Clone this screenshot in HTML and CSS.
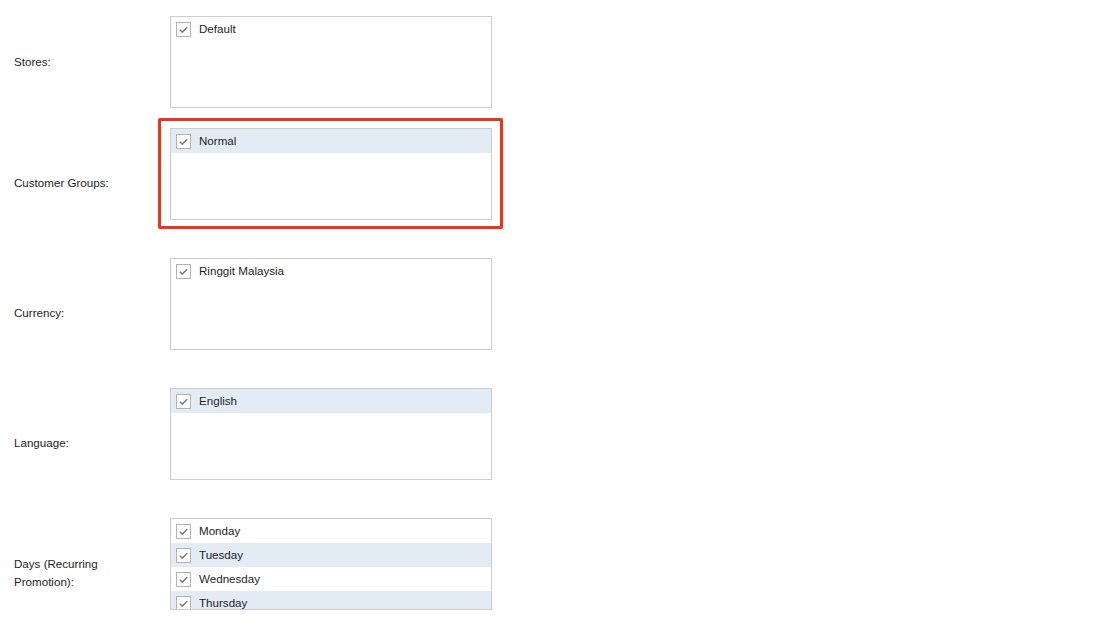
FILE: index.html
```html
<!DOCTYPE html>
<html>
<head>
<meta charset="utf-8">
<link rel="stylesheet" href="styles.css">
</head>
<body>
<div class="form">
  <div class="row first">
    <div class="label">Stores:</div>
    <div class="field">
      <div class="list">
        <div class="item"><span class="cb"><svg viewBox="0 0 12 12"><path d="M2.6 6.2 L4.9 8.4 L9.4 3.9"/></svg></span><span>Default</span></div>
      </div>
    </div>
  </div>
  <div class="row">
    <div class="label">Customer Groups:</div>
    <div class="field">
      <div class="highlight">
        <div class="list">
          <div class="item sel"><span class="cb"><svg viewBox="0 0 12 12"><path d="M2.6 6.2 L4.9 8.4 L9.4 3.9"/></svg></span><span>Normal</span></div>
        </div>
      </div>
    </div>
  </div>
  <div class="row">
    <div class="label">Currency:</div>
    <div class="field">
      <div class="list">
        <div class="item"><span class="cb"><svg viewBox="0 0 12 12"><path d="M2.6 6.2 L4.9 8.4 L9.4 3.9"/></svg></span><span>Ringgit Malaysia</span></div>
      </div>
    </div>
  </div>
  <div class="row">
    <div class="label">Language:</div>
    <div class="field">
      <div class="list">
        <div class="item sel"><span class="cb"><svg viewBox="0 0 12 12"><path d="M2.6 6.2 L4.9 8.4 L9.4 3.9"/></svg></span><span>English</span></div>
      </div>
    </div>
  </div>
  <div class="row">
    <div class="label">Days (Recurring<br>Promotion):</div>
    <div class="field">
      <div class="list">
        <div class="item"><span class="cb"><svg viewBox="0 0 12 12"><path d="M2.6 6.2 L4.9 8.4 L9.4 3.9"/></svg></span><span>Monday</span></div>
        <div class="item sel"><span class="cb"><svg viewBox="0 0 12 12"><path d="M2.6 6.2 L4.9 8.4 L9.4 3.9"/></svg></span><span>Tuesday</span></div>
        <div class="item"><span class="cb"><svg viewBox="0 0 12 12"><path d="M2.6 6.2 L4.9 8.4 L9.4 3.9"/></svg></span><span>Wednesday</span></div>
        <div class="item sel"><span class="cb"><svg viewBox="0 0 12 12"><path d="M2.6 6.2 L4.9 8.4 L9.4 3.9"/></svg></span><span>Thursday</span></div>
      </div>
    </div>
  </div>
</div>
</body>
</html>
```

FILE: styles.css
```css
html, body {
  margin: 0;
  padding: 0;
  background: #ffffff;
  width: 1100px;
  height: 627px;
  overflow: hidden;
}
body {
  font-family: "Liberation Sans", Arial, sans-serif;
  font-size: 11.6px;
  color: #1e1e1e;
}
.form {
  display: flex;
  flex-direction: column;
}
.row {
  display: flex;
  align-items: center;
  height: 130px;
}
.row.first {
  height: 118px;
}
.label {
  width: 170px;
  flex: none;
  padding-left: 14px;
  line-height: 18px;
  box-sizing: border-box;
}
.row.first .label {
  padding-top: 5px;
}
.field {
  align-self: flex-start;
  padding-top: 10px;
}
.row.first .field {
  padding-top: 16px;
}
.highlight {
  margin: -10px 0 0 -12px;
  padding: 7px 8px 6px 9px;
  border: 3px solid #dd3d1e;
  border-radius: 2px;
  width: fit-content;
  box-shadow: 0 0 1px rgba(221, 61, 30, 0.6);
}
.list {
  width: 320px;
  height: 90px;
  border: 1px solid #cdcdcd;
  overflow: hidden;
  background: #fff;
}
.item {
  display: flex;
  align-items: center;
  height: 24px;
  padding-left: 5px;
}
.item > span:last-child {
  position: relative;
  top: -1px;
}
.item.sel {
  background: #e3ecf5;
}
.cb {
  width: 13px;
  height: 13px;
  border: 1px solid #b3b3b3;
  background: #fff;
  margin-right: 8px;
  display: flex;
  align-items: center;
  justify-content: center;
  flex: none;
}
.cb svg {
  width: 13px;
  height: 13px;
}
.cb path {
  fill: none;
  stroke: #7d7d7d;
  stroke-width: 1.4;
}
```
